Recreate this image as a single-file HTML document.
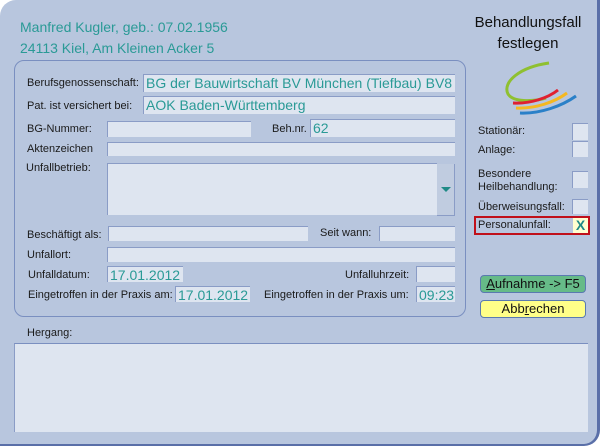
<!DOCTYPE html>
<html><head><meta charset="utf-8"><style>
*{margin:0;padding:0;box-sizing:border-box}
body{width:600px;height:446px;background:#fff;font-family:"Liberation Sans",sans-serif;position:relative;overflow:hidden}
#win{position:absolute;left:0;top:0;width:600px;height:446px;background:#b8c6de;border-radius:16px 0 16px 0;border-right:3px solid #5a6fa8;border-bottom:2px solid #5a6fa8}
.a{position:absolute}
.l{position:absolute;font-size:11px;color:#1a1a1a;white-space:nowrap}
.f{position:absolute;background:#dee5f0;border-top:1px solid #8a9cc6;border-left:1px solid #8a9cc6;overflow:hidden}
.t{color:#2a9a96;font-size:14px;line-height:16px;padding-left:2px;white-space:nowrap}
.cb{position:absolute;left:572px;width:16px;background:#dee5f0;border-top:1px solid #8a9cc6;border-left:1px solid #8a9cc6}
</style></head><body>
<div id="win">
<div class="a" style="left:20px;top:17px;font-size:14px;color:#2a9a96;line-height:21px">Manfred Kugler, geb.: 07.02.1956<br>24113 Kiel, Am Kleinen Acker 5</div>
<div class="a" style="left:470px;top:12px;width:116px;text-align:center;font-size:15px;line-height:21px;color:#111">Behandlungsfall<br>festlegen</div>
<svg class="a" style="left:500px;top:55px" width="85" height="65" viewBox="500 55 85 65">
<path d="M549 63 C520 67 502 82 508 94 C513 102 532 102 546 98" fill="none" stroke="#8fc030" stroke-width="3"/>
<path d="M513 103 C530 104 548 98 558 90" fill="none" stroke="#e02030" stroke-width="3"/>
<path d="M516 108 C535 109 555 102 567 93" fill="none" stroke="#f5b820" stroke-width="3"/>
<path d="M520 113 C540 114 562 106 576 96" fill="none" stroke="#2a80c8" stroke-width="3"/>
</svg>
<div class="a" style="left:14px;top:60px;width:452px;height:257px;border:1px solid #7a8fc0;border-radius:10px"></div>
<div class="l" style="left:27px;top:77px">Berufsgenossenschaft:</div>
<div class="f t" style="left:143px;top:74px;width:312px;height:18px">BG der Bauwirtschaft BV München (Tiefbau) BV8</div>
<div class="l" style="left:27px;top:100px">Pat. ist versichert bei:</div>
<div class="f t" style="left:143px;top:96px;width:312px;height:18px">AOK Baden-Württemberg</div>
<div class="l" style="left:27px;top:123px">BG-Nummer:</div>
<div class="f" style="left:107px;top:121px;width:144px;height:16px"></div>
<div class="l" style="left:272px;top:123px">Beh.nr.</div>
<div class="f t" style="left:310px;top:119px;width:145px;height:18px">62</div>
<div class="l" style="left:27px;top:143px">Aktenzeichen</div>
<div class="f" style="left:107px;top:142px;width:348px;height:14px"></div>
<div class="l" style="left:26px;top:162px">Unfallbetrieb:</div>
<div class="f" style="left:107px;top:163px;width:330px;height:52px"></div>
<div class="a" style="left:437px;top:164px;width:18px;height:52px;background:#c0cce0;border-right:1px solid #8a9cc6;border-bottom:1px solid #8a9cc6"></div>
<div class="a" style="left:441px;top:187px;width:0;height:0;border-left:5px solid transparent;border-right:5px solid transparent;border-top:5px solid #1f8a86"></div>
<div class="l" style="left:27px;top:229px">Beschäftigt als:</div>
<div class="f" style="left:108px;top:226px;width:200px;height:15px"></div>
<div class="l" style="left:320px;top:227px">Seit wann:</div>
<div class="f" style="left:379px;top:226px;width:76px;height:15px"></div>
<div class="l" style="left:27px;top:249px">Unfallort:</div>
<div class="f" style="left:107px;top:247px;width:348px;height:15px"></div>
<div class="l" style="left:28px;top:269px">Unfalldatum:</div>
<div class="f t" style="left:107px;top:266px;width:76px;height:16px">17.01.2012</div>
<div class="l" style="left:345px;top:269px">Unfalluhrzeit:</div>
<div class="f" style="left:416px;top:266px;width:39px;height:16px"></div>
<div class="l" style="left:28px;top:289px">Eingetroffen in der Praxis am:</div>
<div class="f t" style="left:175px;top:286px;width:75px;height:16px">17.01.2012</div>
<div class="l" style="left:264px;top:289px">Eingetroffen in der Praxis um:</div>
<div class="f t" style="left:416px;top:286px;width:39px;height:16px">09:23</div>
<div class="l" style="left:27px;top:327px">Hergang:</div>
<div class="f" style="left:14px;top:343px;width:574px;height:89px;border-top:1px solid #7a8fc0"></div>
<div class="l" style="left:478px;top:125px">Stationär:</div>
<div class="cb" style="top:123px;height:17px"></div>
<div class="l" style="left:478px;top:144px">Anlage:</div>
<div class="cb" style="top:141px;height:16px"></div>
<div class="l" style="left:478px;top:168px;line-height:13px">Besondere<br>Heilbehandlung:</div>
<div class="cb" style="top:171px;height:17px"></div>
<div class="l" style="left:478px;top:201px">Überweisungsfall:</div>
<div class="cb" style="top:199px;height:15px"></div>
<div class="a" style="left:474px;top:216px;width:116px;height:19px;border:2px solid #c0101a"></div>
<div class="l" style="left:478px;top:219px">Personalunfall:</div>
<div class="a" style="left:573px;top:218px;width:15px;height:15px;background:#ffffd0;color:#1f8a86;font-size:14px;font-weight:bold;text-align:center;line-height:15px">X</div>
<div class="a" style="left:480px;top:275px;width:106px;height:18px;background:#66bb88;border:1px solid #5a7ab0;border-radius:4px;font-size:13px;text-align:center;line-height:16px;color:#111"><u>A</u>ufnahme -&gt; F5</div>
<div class="a" style="left:480px;top:300px;width:106px;height:18px;background:#ffff88;border:1px solid #5a7ab0;border-radius:4px;font-size:13px;text-align:center;line-height:16px;color:#111">Abb<u>r</u>echen</div>
</div>
</body></html>
